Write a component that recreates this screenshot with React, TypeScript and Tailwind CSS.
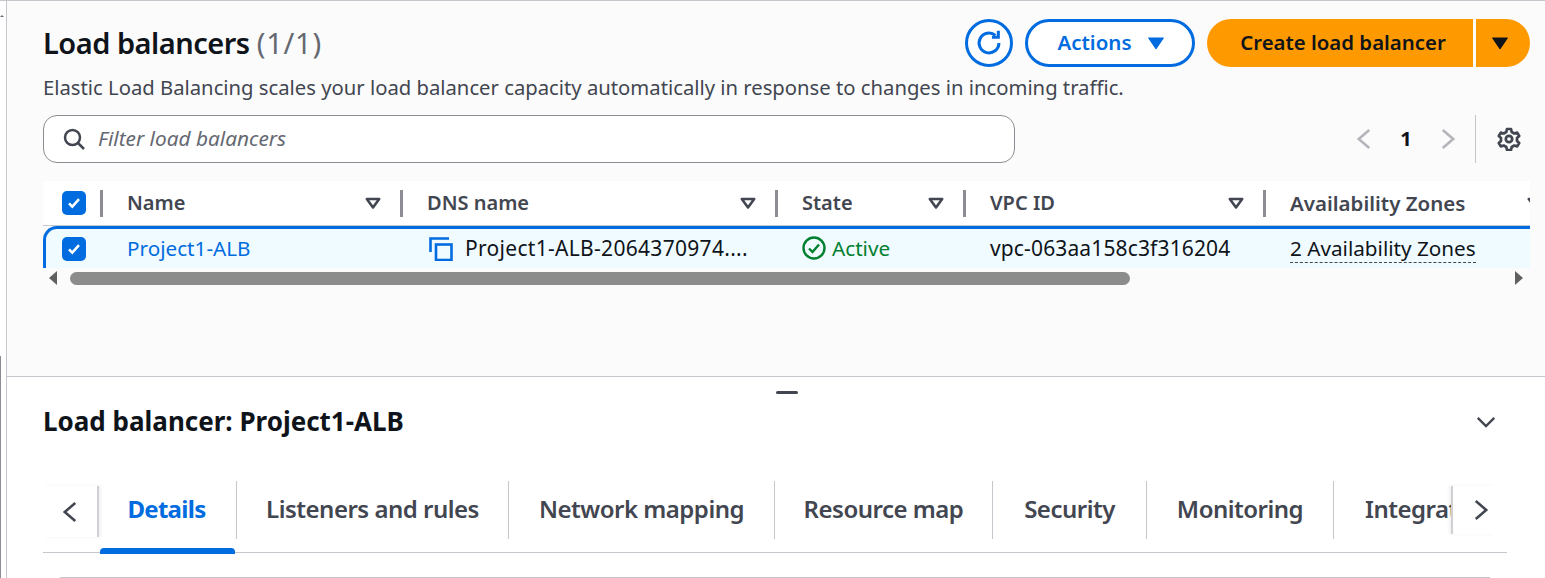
import React from "react";

const Caret = ({ className = "" }: { className?: string }) => (
  <svg viewBox="0 0 16 16" className={className} aria-hidden="true">
    <path d="M2.500 4.500h11L8 12z" fill="none" stroke="currentColor" strokeWidth="2.300" strokeLinejoin="round" />
  </svg>
);

const Solid = ({ className = "" }: { className?: string }) => (
  <svg viewBox="0 0 16 16" className={className} aria-hidden="true">
    <path d="M1.500 3.500h13L8 13z" fill="currentColor" stroke="currentColor" strokeWidth="1" strokeLinejoin="round" />
  </svg>
);

const Check = () => (
  <span className="flex h-6 w-6 items-center justify-center rounded-[5px] bg-[#006ce0]">
    <svg viewBox="0 0 16 16" className="h-4 w-4" aria-hidden="true">
      <path d="M3 8.300l3.300 3.400L13 4.200" fill="none" stroke="#fff" strokeWidth="2.500" />
    </svg>
  </span>
);

const Chev = ({ dir, className = "" }: { dir: "l" | "r" | "d"; className?: string }) => (
  <svg viewBox="0 0 16 16" className={className} fill="none" stroke="currentColor" strokeWidth="1.700" aria-hidden="true">
    {dir === "l" && <path d="M11.500 2L4.500 8l7 6" />}
    {dir === "r" && <path d="M4.500 2l7 6-7 6" />}
    {dir === "d" && <path d="M2 5l6 6 6-6" />}
  </svg>
);

const Sep = () => <span className="h-[27px] w-[3px] shrink-0 bg-[#8c8c94]" />;

const HeadCell = ({ label, w, size = "text-[20px]" }: { label: string; w: string; size?: string }) => (
  <div className={`flex shrink-0 items-center justify-between pl-[24px] ${w}`}>
    <span className={`font-semibold text-[#424650] ${size}`}>{label}</span>
    <Caret className="mr-[18px] h-[18px] w-[18px] text-[#424650]" />
  </div>
);

const tabs = [
  { label: "Listeners and rules", w: "w-[272px]" },
  { label: "Network mapping", w: "w-[266px]" },
  { label: "Resource map", w: "w-[218px]" },
  { label: "Security", w: "w-[154px]" },
  { label: "Monitoring", w: "w-[187px]" },
];

export default function App() {
  return (
    <div className="flex h-[578px] w-[1545px] overflow-hidden bg-white font-['Noto_Sans',sans-serif]">
      <div className="relative w-[7px] shrink-0 border-t border-r border-t-[#c6c6cd] border-r-[#c6c6cd] bg-white">
        <span className="absolute left-0 top-[14px] h-0 w-0 border-x-[2px] border-b-[2px] border-x-transparent border-b-[#656871]" />
        <div className="absolute top-[355px] bottom-0 left-0 w-[1px] bg-[#8c8c94]" />
      </div>
      <div className="flex min-w-0 flex-1 flex-col">
        <section className="h-[377px] shrink-0 border-t border-b border-[#c6c6cd] bg-[#fbfbfb] pl-[36px] pr-[15px] pt-[18px]">
          <div className="flex h-12 items-center justify-between">
            <h1 className="mt-[-1px] text-[29px] font-semibold tracking-[-0.5px] text-[#0f141a]">
              Load balancers <span className="font-normal tracking-[0.8px] text-[#656871]">(1/1)</span>
            </h1>
            <div className="flex items-center">
              <span className="flex h-12 w-12 items-center justify-center rounded-full border-[3px] border-[#006ce0] bg-white text-[#006ce0]">
                <svg viewBox="0 0 24 24" className="h-[28px] w-[28px]" fill="none" stroke="currentColor" strokeWidth="2.600" aria-hidden="true">
                  <path d="M20.500 12a8.500 8.500 0 1 1-3-6.500" />
                  <path d="M20 1.500V7h-5.500" />
                </svg>
              </span>
              <span className="ml-3 flex h-12 w-[170px] items-center justify-center gap-[15px] rounded-full border-[3px] border-[#006ce0] bg-white pl-[2px] text-[20.500px] font-semibold text-[#006ce0]">
                <span className="mt-[-1px]">Actions</span>
                <Solid className="h-[18px] w-[18px]" />
              </span>
              <span className="ml-3 flex h-12 w-[266px] items-center justify-center rounded-l-full bg-[#ff9900] pb-[1px] pl-[6px] text-[20.400px] font-semibold text-[#0f141a]">
                Create load balancer
              </span>
              <span className="ml-[3px] flex h-12 w-[54px] items-center justify-center rounded-r-full bg-[#ff9900] pr-[6px] text-[#0f141a]">
                <Solid className="h-[18px] w-[18px]" />
              </span>
            </div>
          </div>
          <p className="mt-[5px] text-[20.250px] leading-[30px] text-[#424650]">
            Elastic Load Balancing scales your load balancer capacity automatically in response to changes in incoming traffic.
          </p>
          <div className="mt-[13px] flex h-12 items-center">
            <div className="flex h-12 w-[972px] items-center rounded-[14px] border border-[#8c8c94] bg-white pl-[18px]">
              <svg viewBox="0 0 24 24" className="h-[24px] w-[24px] text-[#424650]" fill="none" stroke="currentColor" strokeWidth="2.500" aria-hidden="true">
                <circle cx="10.500" cy="10.500" r="7.500" />
                <path d="M16 16l6 6" />
              </svg>
              <span className="ml-[12px] text-[20.800px] italic text-[#656871]">Filter load balancers</span>
            </div>
            <div className="ml-auto flex h-12 items-center">
              <span className="flex w-[42px] justify-center"><Chev dir="l" className="h-6 w-6 text-[#b4b4bb]" /></span>
              <span className="w-[42px] text-center text-[20px] font-bold text-[#0f141a]">1</span>
              <span className="flex w-[42px] justify-center"><Chev dir="r" className="h-6 w-6 text-[#b4b4bb]" /></span>
              <span className="ml-[6px] h-12 w-px bg-[#c6c6cd]" />
              <svg viewBox="0 0 24 24" className="ml-[21px] mr-[9px] h-6 w-6 text-[#424650]" fill="none" stroke="currentColor" strokeWidth="2.700" strokeLinejoin="round" aria-hidden="true">
                <circle cx="12" cy="12" r="3.200" />
                <path d="M10 2h4l.7 3 2.600 1.500 2.900-.9 2 3.400-2.200 2.100v2.800l2.200 2.100-2 3.400-2.900-.9-2.600 1.500-.7 3h-4l-.7-3-2.600-1.500-2.900.9-2-3.400 2.200-2.100v-2.800L1.800 9l2-3.400 2.900.9L9.300 5z" />
              </svg>
            </div>
          </div>

          <div className="mt-[18px] w-[1487px] overflow-hidden">
            <div className="flex h-[45px] items-center border-b border-[#c6c6cd] bg-white">
              <div className="flex w-[57px] shrink-0 justify-end pr-[14px]"><Check /></div>
              <Sep />
              <HeadCell label="Name" w="w-[297px]" />
              <Sep />
              <HeadCell label="DNS name" w="w-[372px]" />
              <Sep />
              <HeadCell label="State" w="w-[185px]" />
              <Sep />
              <HeadCell label="VPC ID" w="w-[297px]" />
              <Sep />
              <HeadCell label="Availability Zones" w="w-[296px]" size="text-[20.500px]" />
            </div>
            <div className="flex h-[42px] items-center overflow-hidden rounded-tl-[14px] border-t-[3px] border-l-[3px] border-[#006ce0] bg-[#f0fbff] text-[20.700px] text-[#0f141a]">
              <div className="flex w-[54px] shrink-0 justify-end pr-[14px]"><Check /></div>
              <div className="w-[303px] shrink-0 pl-[27px] text-[#006ce0]">Project1-ALB</div>
              <div className="flex w-[375px] shrink-0 items-center pl-[26px]">
                <svg viewBox="0 0 24 24" className="mr-[12px] h-6 w-6 text-[#006ce0]" fill="none" stroke="currentColor" strokeWidth="2.600" aria-hidden="true">
                  <path d="M1.500 15V1.500H20" />
                  <rect x="7" y="7.500" width="15.500" height="15.500" />
                </svg>
                <span className="text-[21px] tracking-[0.3px]">Project1-ALB-2064370974....</span>
              </div>
              <div className="flex w-[188px] shrink-0 items-center pl-[24px] text-[#00802f]">
                <svg viewBox="0 0 24 24" className="mr-[6px] h-6 w-6" fill="none" stroke="currentColor" strokeWidth="2.400" aria-hidden="true">
                  <circle cx="12" cy="12" r="10.500" />
                  <path d="M7 12.500l3.500 3.500L17 8.500" />
                </svg>
                Active
              </div>
              <div className="w-[300px] shrink-0 pl-[24px] text-[21px] tracking-[0.14px]">vpc-063aa158c3f316204</div>
              <div className="shrink-0 pl-[24px]">
                <span className="border-b border-dashed border-[#424650] leading-[24px]">2 Availability Zones</span>
              </div>
            </div>
            <div className="flex h-[20px] items-center">
              <span className="ml-[6px] h-0 w-0 border-y-[7px] border-r-[8px] border-y-transparent border-r-[#606060]" />
              <span className="ml-[13px] h-[13px] w-[1060px] rounded-full bg-[#8c8c8c]" />
              <span className="ml-auto mr-[7px] h-0 w-0 border-y-[7px] border-l-[8px] border-y-transparent border-l-[#606060]" />
            </div>
          </div>
        </section>

        <section className="relative flex-1 bg-white pl-[36px]">
          <span className="absolute left-[769px] top-[14px] h-[3px] w-[22px] rounded-full bg-[#424650]" />
          <div className="flex h-[90px] items-center">
            <h2 className="mt-[-1px] text-[26px] font-bold text-[#0f141a]">Load balancer: Project1-ALB</h2>
            <Chev dir="d" className="ml-auto mr-[48px] h-[22px] w-[22px] text-[#424650]" />
          </div>
          <div className="relative mt-[14px] flex h-[72px] w-[1464px] items-stretch border-b border-[#c6c6cd]">
            <div className="my-[5px] mb-[15px] flex w-[56px] shrink-0 items-center justify-center border-r-2 border-r-[#d0d0d4] text-[#424650] shadow-[2px_0_3px_rgba(0,0,0,0.06)]">
              <Chev dir="l" className="h-6 w-6" />
            </div>
            <div className="relative flex h-[72px] w-[137px] shrink-0 items-center justify-center pb-[16px] pr-[2px] text-[24px] font-bold tracking-[-0.7px] text-[#006ce0]">
              Details
              <span className="absolute bottom-[-1px] left-[1px] h-[6px] w-[135px] rounded-t-[4px] bg-[#006ce0]" />
            </div>
            {tabs.map((t) => (
              <div key={t.label} className={`flex h-[58px] shrink-0 items-center justify-center border-l border-[#c6c6cd] pb-[2px] text-[24px] font-semibold tracking-[-0.5px] text-[#424650] ${t.w}`}>
                {t.label}
              </div>
            ))}
            <div className="flex h-[58px] w-[118px] shrink-0 items-center overflow-hidden border-l border-[#c6c6cd] pb-[2px] pl-[31px] text-[24px] font-semibold tracking-[-0.5px] text-[#424650]">
              Integrations
            </div>
            <div className="absolute right-[12px] top-[5px] flex h-[48px] w-[44px] items-center border-l-2 border-[#d0d0d4] bg-white pl-[16px] text-[#424650] shadow-[-2px_0_3px_rgba(0,0,0,0.06)]">
              <Chev dir="r" className="h-6 w-6" />
            </div>
          </div>
          <div className="ml-[17px] mt-[24px] h-px w-[1430px] bg-[#c6c6cd]" />
        </section>
      </div>
    </div>
  );
}
